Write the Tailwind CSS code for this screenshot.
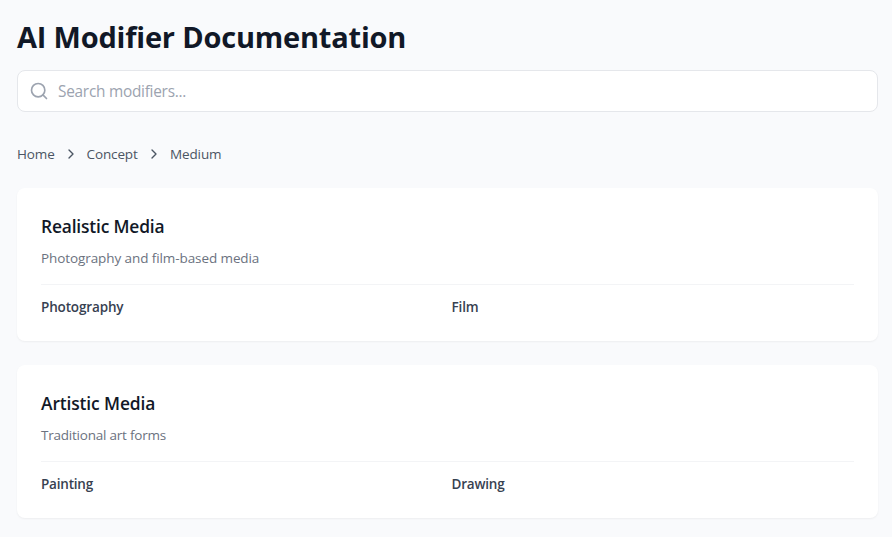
<!DOCTYPE html>
<html lang="en">
<head>
<meta charset="utf-8">
<title>AI Modifier Documentation</title>
<script src="https://cdn.jsdelivr.net/npm/@tailwindcss/browser@4"></script>
</head>
<body class="h-[537px] overflow-hidden bg-[#f9fafc] pl-[17px] pr-[14px] pt-[17px] font-['Segoe_UI','Open_Sans','Noto_Sans',sans-serif]">
<h1 class="h-10 whitespace-nowrap text-[29px] font-bold leading-[39px] tracking-[-0.2px] text-[#111827]">AI Modifier Documentation</h1>
<div class="mt-[13px] flex h-[42px] items-center gap-[9px] rounded-lg border border-[#e5e7eb] bg-white pl-[11px]">
<svg class="size-5 text-[#9ca3af]" viewBox="0 0 24 24" fill="none" stroke="currentColor" stroke-width="2" stroke-linecap="round" stroke-linejoin="round"><circle cx="11" cy="11" r="8"/><path d="m21 21-4.3-4.3"/></svg>
<span class="pt-[2px] text-[15.4px] leading-6 tracking-[-0.26px] text-[#9ca3af]">Search modifiers...</span>
</div>
<nav class="mt-8 flex h-5 items-center text-[13.5px] leading-5 tracking-[-0.12px] text-[#4b5563]">
<span class="w-[37.5px]">Home</span>
<svg class="mx-2 size-4" viewBox="0 0 24 24" fill="none" stroke="currentColor" stroke-width="2" stroke-linecap="round" stroke-linejoin="round"><path d="m9 18 6-6-6-6"/></svg>
<span class="w-[51.5px]">Concept</span>
<svg class="mx-2 size-4" viewBox="0 0 24 24" fill="none" stroke="currentColor" stroke-width="2" stroke-linecap="round" stroke-linejoin="round"><path d="m9 18 6-6-6-6"/></svg>
<span>Medium</span>
</nav>
<main class="mt-6 flex flex-col gap-6">
<section class="h-[153px] rounded-lg bg-white p-6 shadow-[0_1px_2px_0_rgb(0_0_0/0.05)]">
<h2 class="text-[17.4px] font-semibold leading-7 tracking-[-0.18px] text-[#111827]">Realistic Media</h2>
<p class="mt-2 text-[13.5px] leading-5 tracking-[-0.09px] text-[#6b7280]">Photography and film-based media</p>
<div class="mt-4 grid grid-cols-2 gap-2 border-t border-[#f3f4f6] pt-3 text-[13.5px] font-semibold leading-5 tracking-[-0.15px] text-[#374151]"><span>Photography</span><span>Film</span></div>
</section>
<section class="h-[153px] rounded-lg bg-white p-6 shadow-[0_1px_2px_0_rgb(0_0_0/0.05)]">
<h2 class="text-[17.4px] font-semibold leading-7 tracking-[-0.12px] text-[#111827]">Artistic Media</h2>
<p class="mt-2 text-[13.5px] leading-5 tracking-[-0.22px] text-[#6b7280]">Traditional art forms</p>
<div class="mt-4 grid grid-cols-2 gap-2 border-t border-[#f3f4f6] pt-3 text-[13.5px] font-semibold leading-5 tracking-[-0.2px] text-[#374151]"><span>Painting</span><span>Drawing</span></div>
</section>
</main>
</body>
</html>
